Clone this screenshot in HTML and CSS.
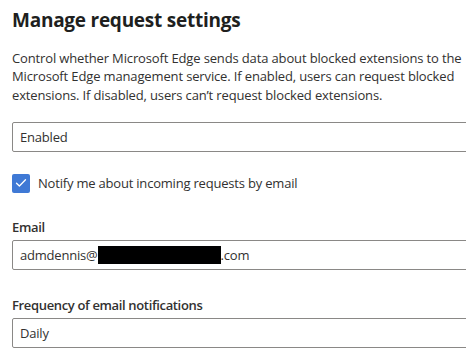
FILE: index.html
```html
<!DOCTYPE html>
<html lang="en">
<head>
<meta charset="utf-8">
<title>Manage request settings</title>
<link rel="stylesheet" href="styles.css">
</head>
<body>
<main class="panel">
  <h1 class="title">Manage request settings</h1>
  <p class="desc">Control whether Microsoft Edge sends data about blocked extensions to the Microsoft Edge management service. If enabled, users can request blocked extensions. If disabled, users can’t request blocked extensions.</p>
  <div class="field select-box">Enabled</div>
  <label class="check-row">
    <span class="checkbox">
      <svg width="12" height="10" viewBox="0 0 12 10"><path d="M1.5 5.2 L4.4 8 L10.5 1.8" fill="none" stroke="#fff" stroke-width="1.3" stroke-linecap="round" stroke-linejoin="round"/></svg>
    </span>
    <span class="check-label">Notify me about incoming requests by email</span>
  </label>
  <div class="group group-email">
    <div class="label">Email</div>
    <div class="field">admdennis@<span class="redact"></span>.com</div>
  </div>
  <div class="group group-freq">
    <div class="label">Frequency of email notifications</div>
    <div class="field">Daily</div>
  </div>
</main>
</body>
</html>
```
FILE: styles.css
```css
html, body {
  margin: 0;
  padding: 0;
  background: #ffffff;
  overflow: hidden;
}
body {
  font-family: "Open Sans", "Noto Sans", "Liberation Sans", sans-serif;
  color: #323130;
}
.panel {
  width: 460px;
  padding: 6px 0 0 12px;
}
.title {
  margin: 0;
  font-size: 19px;
  line-height: 28px;
  font-weight: 700;
  letter-spacing: -0.25px;
  color: #201f1e;
}
.desc {
  margin: 15px 0 0 0;
  font-size: 13px;
  line-height: 18.4px;
  letter-spacing: -0.14px;
  width: 454px;
}
.field {
  box-sizing: border-box;
  height: 30px;
  border: 1px solid #8a8886;
  border-radius: 2px;
  padding: 0 7px;
  font-size: 13px;
  letter-spacing: -0.2px;
  line-height: 28px;
  display: flex;
  align-items: center;
}
.select-box {
  margin-top: 18px;
}
.check-row {
  display: flex;
  align-items: center;
  gap: 8px;
  margin-top: 21px;
  font-size: 13px;
  letter-spacing: -0.2px;
  line-height: 20px;
}
.checkbox {
  box-sizing: border-box;
  width: 18px;
  height: 19px;
  border-radius: 2px;
  background: #3f79d5;
  display: flex;
  align-items: center;
  justify-content: center;
}
.group-email {
  margin-top: 24px;
}
.group-freq {
  margin-top: 25px;
}
.label {
  font-size: 13px;
  line-height: 20px;
  font-weight: 600;
  letter-spacing: -0.35px;
  margin-bottom: 3px;
}
.redact {
  display: inline-block;
  width: 123px;
  height: 18px;
  background: #000;
}
```
